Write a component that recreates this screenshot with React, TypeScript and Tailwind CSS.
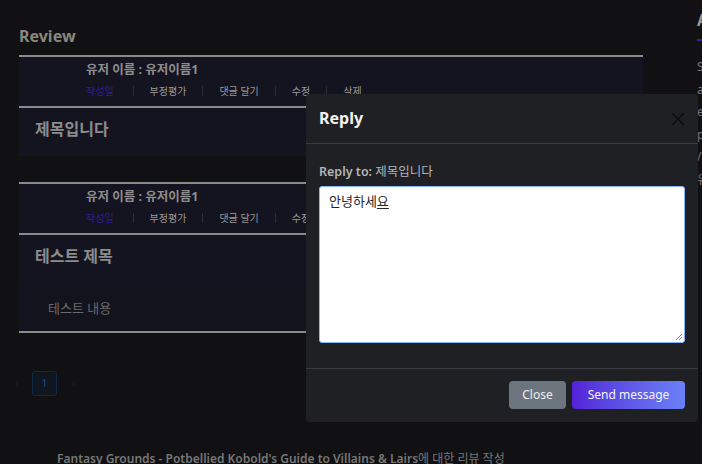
const FONT = "font-['Noto_Sans','Noto_Sans_CJK_KR',sans-serif]"

function Actions() {
  const items = ['부정평가', '댓글 달기', '수정', '삭제']
  return (
    <div className="flex items-center text-[10px] leading-none text-[#9a9a9a]">
      <span className="pr-[19px] text-[#331d8c]">작성일</span>
      {items.map(item => (
        <span key={item} className="border-l border-[#2c2c36] px-[16px]">{item}</span>
      ))}
    </div>
  )
}

function ReviewCard({ title, content }: { title: string; content?: string }) {
  return (
    <div className="bg-[#141420]">
      <div className="border-t-2 border-[#8a8a8a] h-[51px] pl-[67px] pt-[3px]">
        <p className="text-[12.5px] font-bold text-[#8e8e8e] leading-[20px]">유저 이름 : 유저이름1</p>
        <div className="mt-[6px]"><Actions /></div>
      </div>
      <div className="border-t-2 border-[#8a8a8a] h-[50px] pl-[16px] pt-[10px]">
        <p className="text-[16px] font-bold text-[#8c8c8c] leading-[22px]">{title}</p>
      </div>
      {content && (
        <div className="bg-[#13131d] h-[50px] pl-[29px] pt-[15px] border-b-2 border-[#8a8a8a]">
          <p className="text-[13px] text-[#6a6a6a] leading-[20px]">{content}</p>
        </div>
      )}
    </div>
  )
}

export default function App() {
  return (
    <div className={`relative w-[702px] h-[464px] overflow-hidden bg-[#111113] ${FONT}`}>
      <div className="flex">
        <div className="w-[624px] ml-[19px] shrink-0">
          <h2 className="pt-[25px] h-[55px] text-[16px] font-bold text-[#8a8780] leading-[22px]">Review</h2>
          <ReviewCard title="제목입니다" />
          <div className="h-[26px]" />
          <ReviewCard title="테스트 제목" content="테스트 내용" />
          <div className="flex items-center mt-[38px] -ml-[9px] h-[25px] text-[11px]">
            <span className="w-[14px] text-center text-[#1e1e22]">‹</span>
            <span className="ml-[8px] w-[25px] h-[25px] rounded-[3px] border border-[#0f2a44] bg-[#0f1620] flex items-center justify-center text-[#1c4a80]">1</span>
            <span className="ml-[10px] w-[14px] text-center text-[#1e1e22]">›</span>
          </div>
          <p className="mt-[54px] ml-[38px] text-[12px] text-[#777] whitespace-nowrap leading-[18px]">
            <span className="font-semibold">Fantasy Grounds - Potbellied Kobold's Guide to Villains &amp; Lairs</span>에 대한 리뷰 작성
          </p>
        </div>
        <div className="ml-[54px] shrink-0 w-[120px]">
          <p className="pt-[9px] text-[16px] font-bold text-[#9a9a9a] leading-[22px]">A</p>
          <div className="mt-[8px] h-[2px] w-[20px] bg-[#3b1fa0]" />
          <div className="mt-[15px] text-[12px] text-[#777] leading-[22.5px]">
            <p>S</p><p>a</p><p>e</p><p>p</p><p>/</p><p>유</p>
          </div>
        </div>
      </div>

      <div className="absolute left-[306px] top-[94px] w-[392px] h-[328px] rounded-[4px] bg-[#1f2024] flex flex-col">
        <div className="h-[50px] border-b border-[#3a3b40] flex items-center justify-between px-[13px]">
          <h3 className="text-[16px] font-bold text-[#f2f2f2] -mt-[2px]">Reply</h3>
          <svg width="14" height="14" viewBox="0 0 14 14">
            <path d="M1 1L13 13M13 1L1 13" stroke="#0e0e10" strokeWidth="1.6" />
          </svg>
        </div>
        <div className="px-[13px] pt-[19px] h-[225px] border-b border-[#3a3b40]">
          <p className="text-[12.5px] text-[#b5b5b5] leading-[18px] mb-[5px]">
            <span className="font-semibold">Reply to:</span> 제목입니다
          </p>
          <div className="relative h-[157px] rounded-[3px] border border-[#86b7fe] bg-white px-[9px] pt-[4px]">
            <p className="text-[13px] text-[#212529] leading-[20px]">안녕하세<span className="underline underline-offset-2">요</span></p>
            <svg width="8" height="8" viewBox="0 0 8 8" className="absolute right-[1px] bottom-[1px]">
              <path d="M7 1L1 7M7 4L4 7" stroke="#8a8a8a" strokeWidth="1" />
            </svg>
          </div>
        </div>
        <div className="flex justify-end items-center gap-[6px] px-[13px] pt-[12px]">
          <button className="h-[28px] w-[57px] rounded-[4px] bg-[#6c757d] text-[12px] text-[#eee]">Close</button>
          <button className="h-[28px] w-[113px] rounded-[4px] bg-gradient-to-r from-[#5420d8] to-[#6a80f6] text-[12px] text-[#f4f4ff]">Send message</button>
        </div>
      </div>
    </div>
  )
}
